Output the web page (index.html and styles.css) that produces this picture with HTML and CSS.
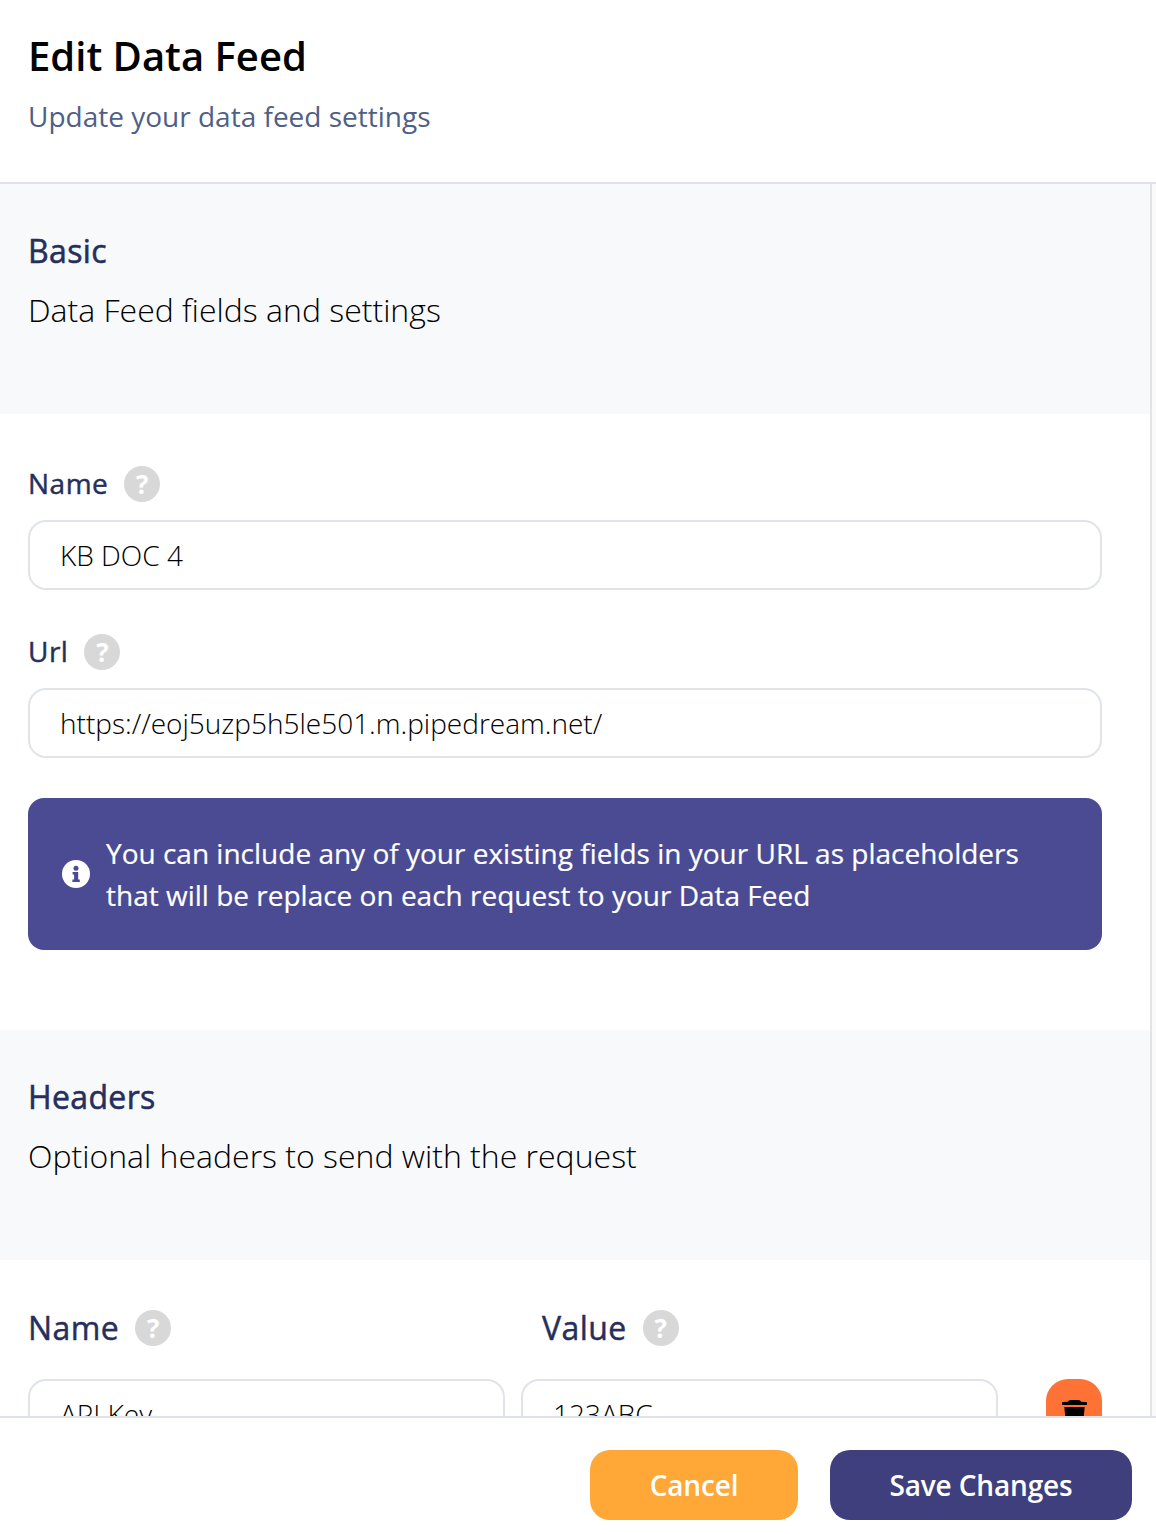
FILE: index.html
```html
<!DOCTYPE html>
<html lang="en">
<head>
<meta charset="utf-8">
<title>Edit Data Feed</title>
<link rel="stylesheet" href="styles.css">
</head>
<body>
<div class="modal">
  <header class="head">
    <h1 class="title">Edit Data Feed</h1>
    <p class="subtitle">Update your data feed settings</p>
  </header>
  <div class="scroll">
    <div class="content">
      <section class="band band-basic">
        <h2 class="band-title">Basic</h2>
        <p class="band-text">Data Feed fields and settings</p>
      </section>
      <section class="fields">
        <div class="label-row"><label class="label">Name</label><span class="help">?</span></div>
        <div class="input">KB DOC 4</div>
        <div class="label-row label-row-url"><label class="label">Url</label><span class="help">?</span></div>
        <div class="input">https://eoj5uzp5h5le501.m.pipedream.net/</div>
        <div class="notice">
          <svg class="notice-icon" viewBox="0 0 28 28" width="28" height="28" aria-hidden="true"><circle cx="14" cy="14" r="14" fill="#fff"/><circle cx="14" cy="8.2" r="2.5" fill="#4a4b93"/><path d="M10.6 12h5.6v7.4h1.6v2.6h-7.4v-2.6h1.7v-4.8h-1.5z" fill="#4a4b93"/></svg>
          <p class="notice-text">You can include any of your existing fields in your URL as placeholders that will be replace on each request to your Data Feed</p>
        </div>
      </section>
      <section class="band band-headers">
        <h2 class="band-title">Headers</h2>
        <p class="band-text">Optional headers to send with the request</p>
      </section>
      <section class="headers">
        <div class="header-labels">
          <div class="label-row label-col"><label class="label label-lg">Name</label><span class="help">?</span></div>
          <div class="label-row label-col"><label class="label label-lg">Value</label><span class="help">?</span></div>
        </div>
        <div class="header-row">
          <div class="input input-half">API Key</div>
          <div class="input input-half">123ABC</div>
          <button class="trash" type="button" aria-label="Delete">
            <svg viewBox="0 0 25 26" width="25" height="26" aria-hidden="true"><path d="M6 1.8C6.400.7 7.400 0 8.500 0h8c1.100 0 2.100.7 2.500 1.800L24 2c.6 0 1 .5 1 1.100v.8c0 .6-.4 1.100-1 1.100H1c-.6 0-1-.5-1-1.100v-.8C0 2.500.4 2 1 2z M2.300 7h20.400L21 25H4z" fill="#000"/></svg>
          </button>
        </div>
      </section>
    </div>
  </div>
  <footer class="foot">
    <button class="btn btn-cancel" type="button">Cancel</button>
    <button class="btn btn-save" type="button">Save Changes</button>
  </footer>
</div>
</body>
</html>
```
FILE: styles.css
```css
* { box-sizing: border-box; }
html, body { margin: 0; height: 100%; }
body { background: #fff; font-family: "Open Sans", "Liberation Sans", sans-serif; color: #000; }
.modal { height: 1534px; display: flex; flex-direction: column; overflow: hidden; }
.head { height: 184px; flex: none; padding: 30px 28px 0; border-bottom: 2px solid #e0e2e9; }
.title { margin: 0; font-size: 40px; line-height: 52px; font-weight: 600; letter-spacing: 0; }
.subtitle { margin: 15px 0 0; font-size: 28px; line-height: 38px; color: #4f6087; font-weight: 400; }
.scroll { flex: 1; min-height: 0; overflow: hidden; background: #fafafa; padding-right: 4px; }
.content { background: #fff; border-right: 2px solid #e3e4e6; height: 100%; overflow: hidden; }
.band { background: #f8f9fb; padding: 48px 28px 0; }
.band-basic { height: 230px; }
.band-headers { height: 230px; }
.band-title { margin: 0; font-size: 32px; line-height: 38px; font-weight: 400; letter-spacing: .35px; -webkit-text-stroke: .55px #262f5c; color: #262f5c; }
.band-text { margin: 19px 0 0; font-size: 32px; line-height: 42px; font-weight: 300; color: #000; }
.fields { height: 616px; padding: 52px 48px 0 28px; }
.label-row { display: flex; align-items: center; gap: 16px; height: 36px; }
.label-row-url { margin-top: 44px; }
.label { font-size: 28px; line-height: 36px; font-weight: 400; letter-spacing: .5px; -webkit-text-stroke: .45px #262f5c; color: #262f5c; padding-bottom: 2px; }
.label-lg { font-size: 32px; letter-spacing: .45px; padding-bottom: 0; }
.help { width: 36px; height: 36px; border-radius: 50%; background: #d8d8d8; color: #fff; display: flex; align-items: center; justify-content: center; font-size: 26px; font-weight: 700; }
.input { height: 70px; margin-top: 18px; border: 2px solid #e0e4ea; border-radius: 18px; padding: 0 30px; font-size: 28px; line-height: 66px; font-weight: 300; color: #000; background: #fff; }
.notice { margin-top: 40px; height: 152px; background: #4a4b93; border-radius: 16px; display: flex; align-items: center; gap: 16px; padding: 0 34px; }
.notice-icon { flex: none; }
.notice-text { margin: 0; color: #fff; font-size: 28px; line-height: 42px; font-weight: 400; -webkit-text-stroke: .2px #fff; }
.headers { padding: 50px 48px 0 28px; }
.header-labels { display: flex; }
.label-col { width: 514px; }
.header-row { display: flex; gap: 16px; margin-top: 33px; }
.input-half { width: 477px; margin-top: 0; }
.trash { width: 56px; height: 70px; margin-left: 32px; flex: none; border: 0; border-radius: 22px; background: #ff7236; padding: 21px 0 0; display: flex; justify-content: center; align-items: flex-start; }
.foot { height: 118px; flex: none; border-top: 2px solid #e0e2e9; background: #fff; display: flex; justify-content: flex-end; gap: 32px; padding: 32px 24px 0 0; position: relative; }
.btn { height: 70px; border: 0; border-radius: 20px; color: #fff; font-family: inherit; font-size: 28px; font-weight: 600; letter-spacing: -.15px; padding: 0; }
.btn-cancel { width: 208px; background: #ffa737; }
.btn-save { width: 302px; background: #3f3f7d; }
```
